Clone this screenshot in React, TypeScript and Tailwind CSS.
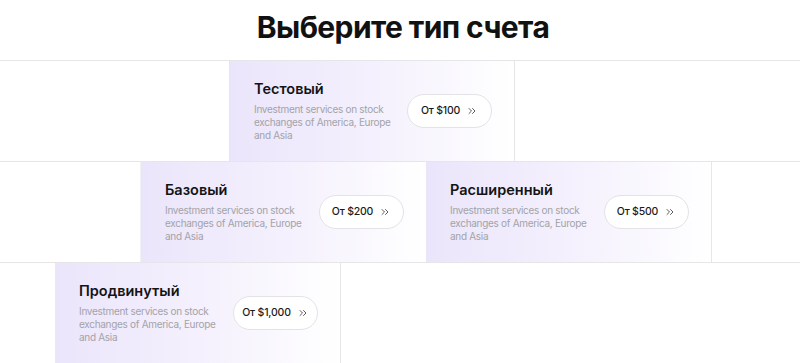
import { ChevronsRight } from 'lucide-react';

interface Plan {
    name: string;
    price: string;
}

const desc = 'Investment services on stock exchanges of America, Europe and Asia';

function PlanCard({ plan, className = '' }: { plan: Plan; className?: string }) {
    return (
        <div
            className={`w-[286px] h-[100px] shrink-0 flex items-center justify-between pl-6 pr-[22px] bg-gradient-to-r from-[#ebe5fb] via-[#f4f0fd] to-white ${className}`}
        >
            <div className="w-[140px]">
                <h3 className="text-[14.5px] font-semibold text-[#141414] leading-[18px] mb-[5px]">{plan.name}</h3>
                <p className="text-[10px] leading-[13px] text-[#a3a3a8] tracking-[-0.3px]">{desc}</p>
            </div>
            <button className="h-[34px] w-[85px] flex items-center justify-center gap-[6px] rounded-full border border-[#e3e3e6] bg-white text-[10.5px] font-medium text-[#1a1a1a] tracking-[-0.2px]">
                <span>{plan.price}</span>
                <ChevronsRight className="w-[12px] h-[12px] text-[#333]" strokeWidth={1.6} />
            </button>
        </div>
    );
}

export default function App() {
    return (
        <div className="w-[800px] h-[363px] overflow-hidden bg-white font-['Inter',sans-serif]">
            <h1 className="h-[60px] flex items-center justify-center text-[30px] font-bold tracking-[-0.6px] text-[#111] pb-[6px] pl-[6px]">
                Выберите тип счета
            </h1>

            {/* Row 1 */}
            <div className="flex border-t border-[#e6e6e8] pl-[229px]">
                <PlanCard plan={{ name: 'Тестовый', price: 'От $100' }} className="border-l border-r border-[#e6e6e8]" />
            </div>

            {/* Row 2 */}
            <div className="flex border-t border-[#e6e6e8] pl-[140px]">
                <PlanCard plan={{ name: 'Базовый', price: 'От $200' }} className="border-l border-[#f1f1f3]" />
                <PlanCard plan={{ name: 'Расширенный', price: 'От $500' }} className="border-r border-[#e6e6e8]" />
            </div>

            {/* Row 3 */}
            <div className="flex border-t border-[#e6e6e8] pl-[55px]">
                <PlanCard plan={{ name: 'Продвинутый', price: 'От $1,000' }} className="border-r border-[#e6e6e8]" />
            </div>
        </div>
    );
}
